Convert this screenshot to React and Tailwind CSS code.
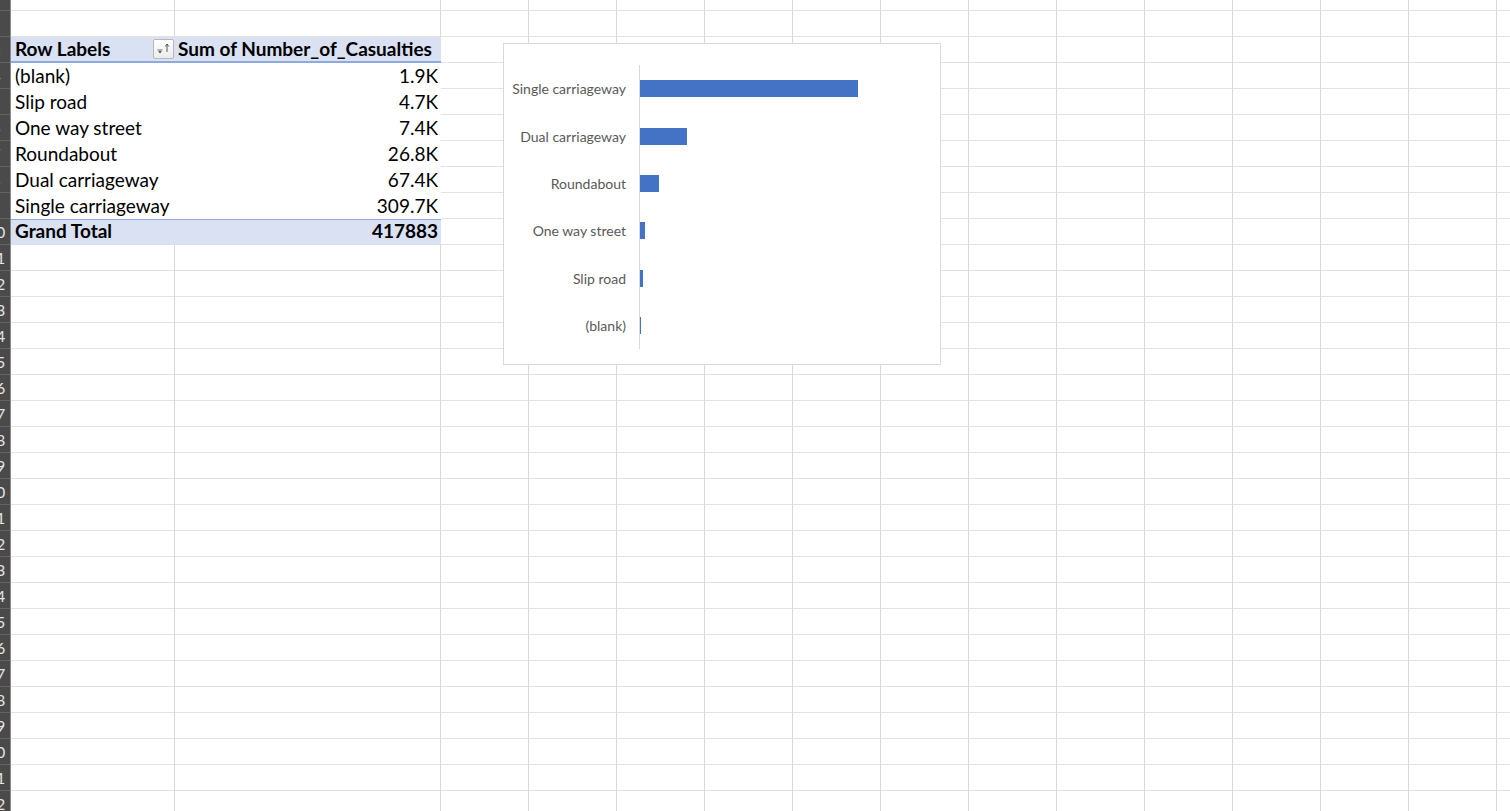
import React from "react";

const COLS = [164, 266, 88, 88, 88, 88, 88, 88, 88, 88, 88, 88, 88, 88, 88];
const NUM_ROWS = 32;

const pivotRows = [
  ["(blank)", "1.9K"],
  ["Slip road", "4.7K"],
  ["One way street", "7.4K"],
  ["Roundabout", "26.8K"],
  ["Dual carriageway", "67.4K"],
  ["Single carriageway", "309.7K"],
];

const chartData = [
  ["Single carriageway", 309.7],
  ["Dual carriageway", 67.4],
  ["Roundabout", 26.8],
  ["One way street", 7.4],
  ["Slip road", 4.7],
  ["(blank)", 1.9],
];

function FilterButton() {
  return (
    <div className="w-[21px] h-[20px] shrink-0 border border-[#b8b8b8] rounded-[2px] bg-gradient-to-b from-[#ffffff] to-[#ececec] mb-[2px]">
      <svg width="19" height="18" viewBox="0 0 19 18">
        <line x1="3.5" y1="10" x2="8.5" y2="10" stroke="#6a6a6a" strokeWidth="1" />
        <path d="M4.2 11.3 L7.8 11.3 L6 13.2 Z" fill="#333" />
        <line x1="13" y1="4.5" x2="13" y2="12" stroke="#555" strokeWidth="1" />
        <path d="M11.2 6.5 L13 4 L14.8 6.5" fill="none" stroke="#555" strokeWidth="1" />
      </svg>
    </div>
  );
}

function GridRow({ h, children }) {
  return <div className={`flex shrink-0 ${h}`}>{children}</div>;
}

function EmptyCells({ from }) {
  return COLS.slice(from).map((w, i) => (
    <div
      key={i}
      className="shrink-0 h-full border-r border-b border-r-[#d9d9d9] border-b-[#e3e3e3]"
      style={{ width: w }}
    />
  ));
}

const txt = "text-[19px] leading-[22px] text-black whitespace-nowrap";

export default function App() {
  const rows = [];
  for (let r = 1; r <= NUM_ROWS; r++) {
    const h = r === 1 ? "h-[11px]" : "h-[26px]";
    let content;
    if (r === 3) {
      content = (
        <>
          <div className="shrink-0 w-[164px] h-full bg-[#d9e1f2] border-b-2 border-b-[#8ea9db] flex items-end justify-between pl-[4px] pr-[1px]">
            <span className={`font-bold ${txt} pb-[1px]`}>Row Labels</span>
            <FilterButton />
          </div>
          <div className="shrink-0 w-[266px] h-full bg-[#d9e1f2] border-b-2 border-b-[#8ea9db] flex items-end pl-[3px]">
            <span className={`font-bold ${txt} pb-[1px]`}>Sum of Number_of_Casualties</span>
          </div>
          <EmptyCells from={2} />
        </>
      );
    } else if (r >= 4 && r <= 9) {
      const [label, val] = pivotRows[r - 4];
      content = (
        <>
          <div className="shrink-0 w-[164px] h-full bg-white flex items-end pl-[4px]">
            <span className={`${txt} pb-[2px]`}>{label}</span>
          </div>
          <div className="shrink-0 w-[266px] h-full bg-white flex items-end justify-end pr-[3px]">
            <span className={`${txt} pb-[2px]`}>{val}</span>
          </div>
          <EmptyCells from={2} />
        </>
      );
    } else if (r === 10) {
      content = (
        <>
          <div className="shrink-0 w-[164px] h-full bg-[#d9e1f2] border-t border-t-[#8ea9db] flex items-end pl-[4px]">
            <span className={`font-bold ${txt} pb-[3px]`}>Grand Total</span>
          </div>
          <div className="shrink-0 w-[266px] h-full bg-[#d9e1f2] border-t border-t-[#8ea9db] flex items-end justify-end pr-[3px]">
            <span className={`font-bold ${txt} pb-[3px]`}>417883</span>
          </div>
          <EmptyCells from={2} />
        </>
      );
    } else {
      content = <EmptyCells from={0} />;
    }
    rows.push(
      <GridRow key={r} h={h}>
        {content}
      </GridRow>
    );
  }

  const headers = [];
  for (let r = 1; r <= NUM_ROWS; r++) {
    const h = r === 1 ? "h-[11px]" : "h-[26px]";
    headers.push(
      <div
        key={r}
        className={`shrink-0 ${h} w-full overflow-hidden flex items-center border-b border-b-[#646464]`}
      >
        <span className="shrink-0 w-[40px] ml-[-24px] text-center text-[16px] leading-none text-[#e4e4e4] whitespace-nowrap">
          {r}
        </span>
      </div>
    );
  }

  const pxPerK = 218 / 309.7;

  return (
    <div className="w-[1510px] h-[811px] overflow-hidden bg-white relative flex font-['Lato','Liberation_Sans',sans-serif]">
      <div className="w-[11px] shrink-0 h-full bg-[#4a4a4a] border-r border-r-[#8c8c8c] flex flex-col">
        {headers}
      </div>
      <div className="flex-1 h-full flex flex-col overflow-hidden">{rows}</div>

      {/* Chart */}
      <div className="absolute left-[503px] top-[43px] w-[438px] h-[322px] bg-white border border-[#d9d9d9]">
        <div className="mt-[21px] flex flex-col">
          {chartData.map(([label, v]) => (
            <div key={label} className="flex h-[47.4px] items-center">
              <div className="w-[122px] text-right text-[14px] text-[#595959] whitespace-nowrap">{label}</div>
              <div className="ml-[13px] h-full border-l border-l-[#d9d9d9] flex items-center">
                <div className="h-[17px] bg-[#4472c4]" style={{ width: Math.max(1, v * pxPerK) }} />
              </div>
            </div>
          ))}
        </div>
      </div>
    </div>
  );
}
